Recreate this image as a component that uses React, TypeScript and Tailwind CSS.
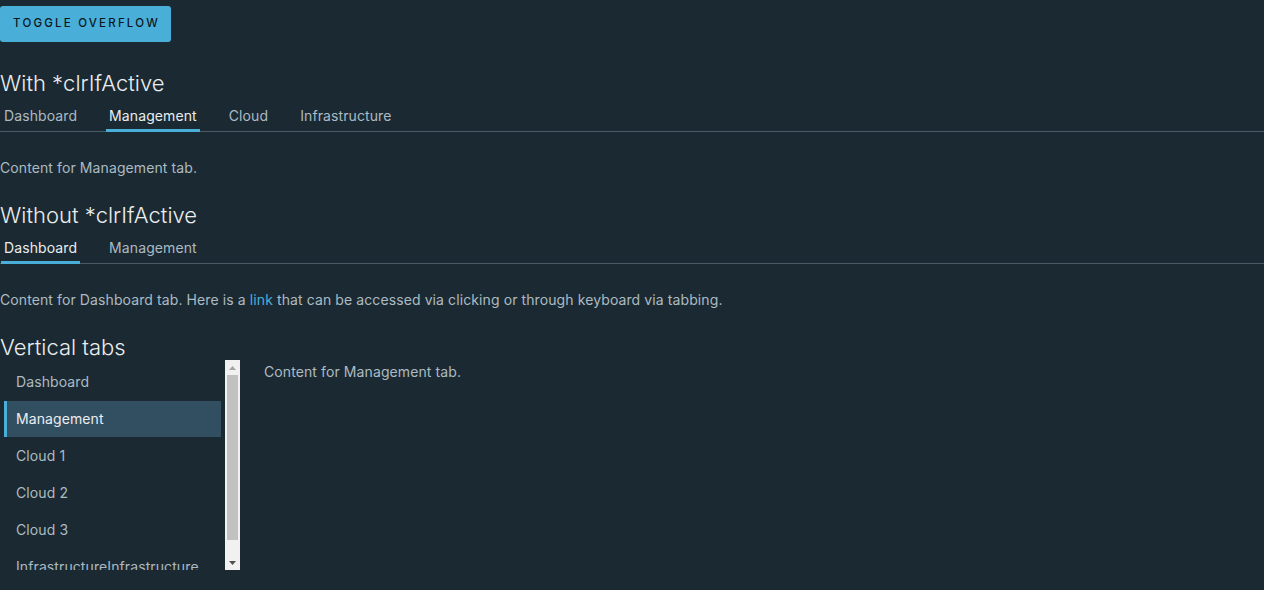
import React from "react";

function Tabs({ items, active }: { items: string[]; active: number }) {
  return (
    <div className="mt-[4px] flex h-[32px] gap-[26px] pl-[1px] shadow-[inset_0_-1px_0_#495a67]">
      {items.map((t, i) => (
        <button
          key={t}
          className={
            i === active
              ? "h-full px-[3px] pb-[1px] text-[14px] text-[#eaedf0] shadow-[inset_0_-3px_0_#49afd9]"
              : "h-full px-[3px] pb-[1px] text-[14px] text-[#acbac3]"
          }
        >
          {t}
        </button>
      ))}
    </div>
  );
}

function Scrollbar() {
  return (
    <div className="flex h-[210px] w-[15px] flex-col items-center bg-[#f1f1f1]">
      <div className="flex h-[15px] w-full items-center justify-center">
        <svg width="7" height="4" viewBox="0 0 7 4">
          <path d="M0 4 L3.5 0 L7 4 Z" fill="#a3a3a3" />
        </svg>
      </div>
      <div className="h-[165px] w-[11px] bg-[#c1c1c1]" />
      <div className="flex flex-1 items-end justify-center pb-[5px]">
        <svg width="7" height="4" viewBox="0 0 7 4">
          <path d="M0 0 L7 0 L3.5 4 Z" fill="#505050" />
        </svg>
      </div>
    </div>
  );
}

export default function App() {
  const vItems = ["Dashboard", "Management", "Cloud 1", "Cloud 2", "Cloud 3", "InfrastructureInfrastructure"];
  return (
    <div
      className="min-h-[590px] bg-[#1b2a32] text-[14px] tracking-[0.1px] text-[#acbac3]"
      style={{ fontFamily: "Inter, 'Noto Sans', sans-serif" }}
    >
      <div className="pt-[6px]">
        <button className="h-[36px] w-[171px] rounded-[3px] bg-[#49afd9] pl-[2px] text-[11.5px] font-medium tracking-[2.2px] text-[#0c171d]">
          TOGGLE OVERFLOW
        </button>
      </div>
      <h2 className="mt-[28px] text-[22px] font-light leading-[26px] tracking-normal text-[#eaedf0]">With *clrIfActive</h2>
      <Tabs items={["Dashboard", "Management", "Cloud", "Infrastructure"]} active={1} />
      <p className="mt-[26px] leading-[20px]">Content for Management tab.</p>
      <h2 className="mt-[24px] text-[22px] font-light leading-[26px] tracking-normal text-[#eaedf0]">Without *clrIfActive</h2>
      <Tabs items={["Dashboard", "Management"]} active={0} />
      <p className="mt-[26px] leading-[20px]">
        Content for Dashboard tab. Here is a <a className="text-[#49afd9]">link</a> that can be accessed via clicking or
        through keyboard via tabbing.
      </p>
      <h2 className="mt-[24px] text-[22px] font-light leading-[26px] tracking-normal text-[#eaedf0]">Vertical tabs</h2>
      <div className="flex">
        <div className="flex w-[240px]">
          <div className="flex h-[210px] w-[225px] flex-col gap-px overflow-hidden px-[4px] pb-[4px] pt-[4px]">
            {vItems.map((t, i) => (
              <div
                key={t}
                className={
                  i === 1
                    ? "flex h-[36px] shrink-0 items-center border-l-[3px] border-[#49afd9] bg-[#324f62] pb-[1px] pl-[9px] text-[#eaedf0]"
                    : "flex h-[36px] shrink-0 items-center border-l-[3px] border-transparent pb-[1px] pl-[9px]"
                }
              >
                {t}
              </div>
            ))}
          </div>
          <Scrollbar />
        </div>
        <div className="ml-[24px] pt-[2px] leading-[20px]">Content for Management tab.</div>
      </div>
    </div>
  );
}
